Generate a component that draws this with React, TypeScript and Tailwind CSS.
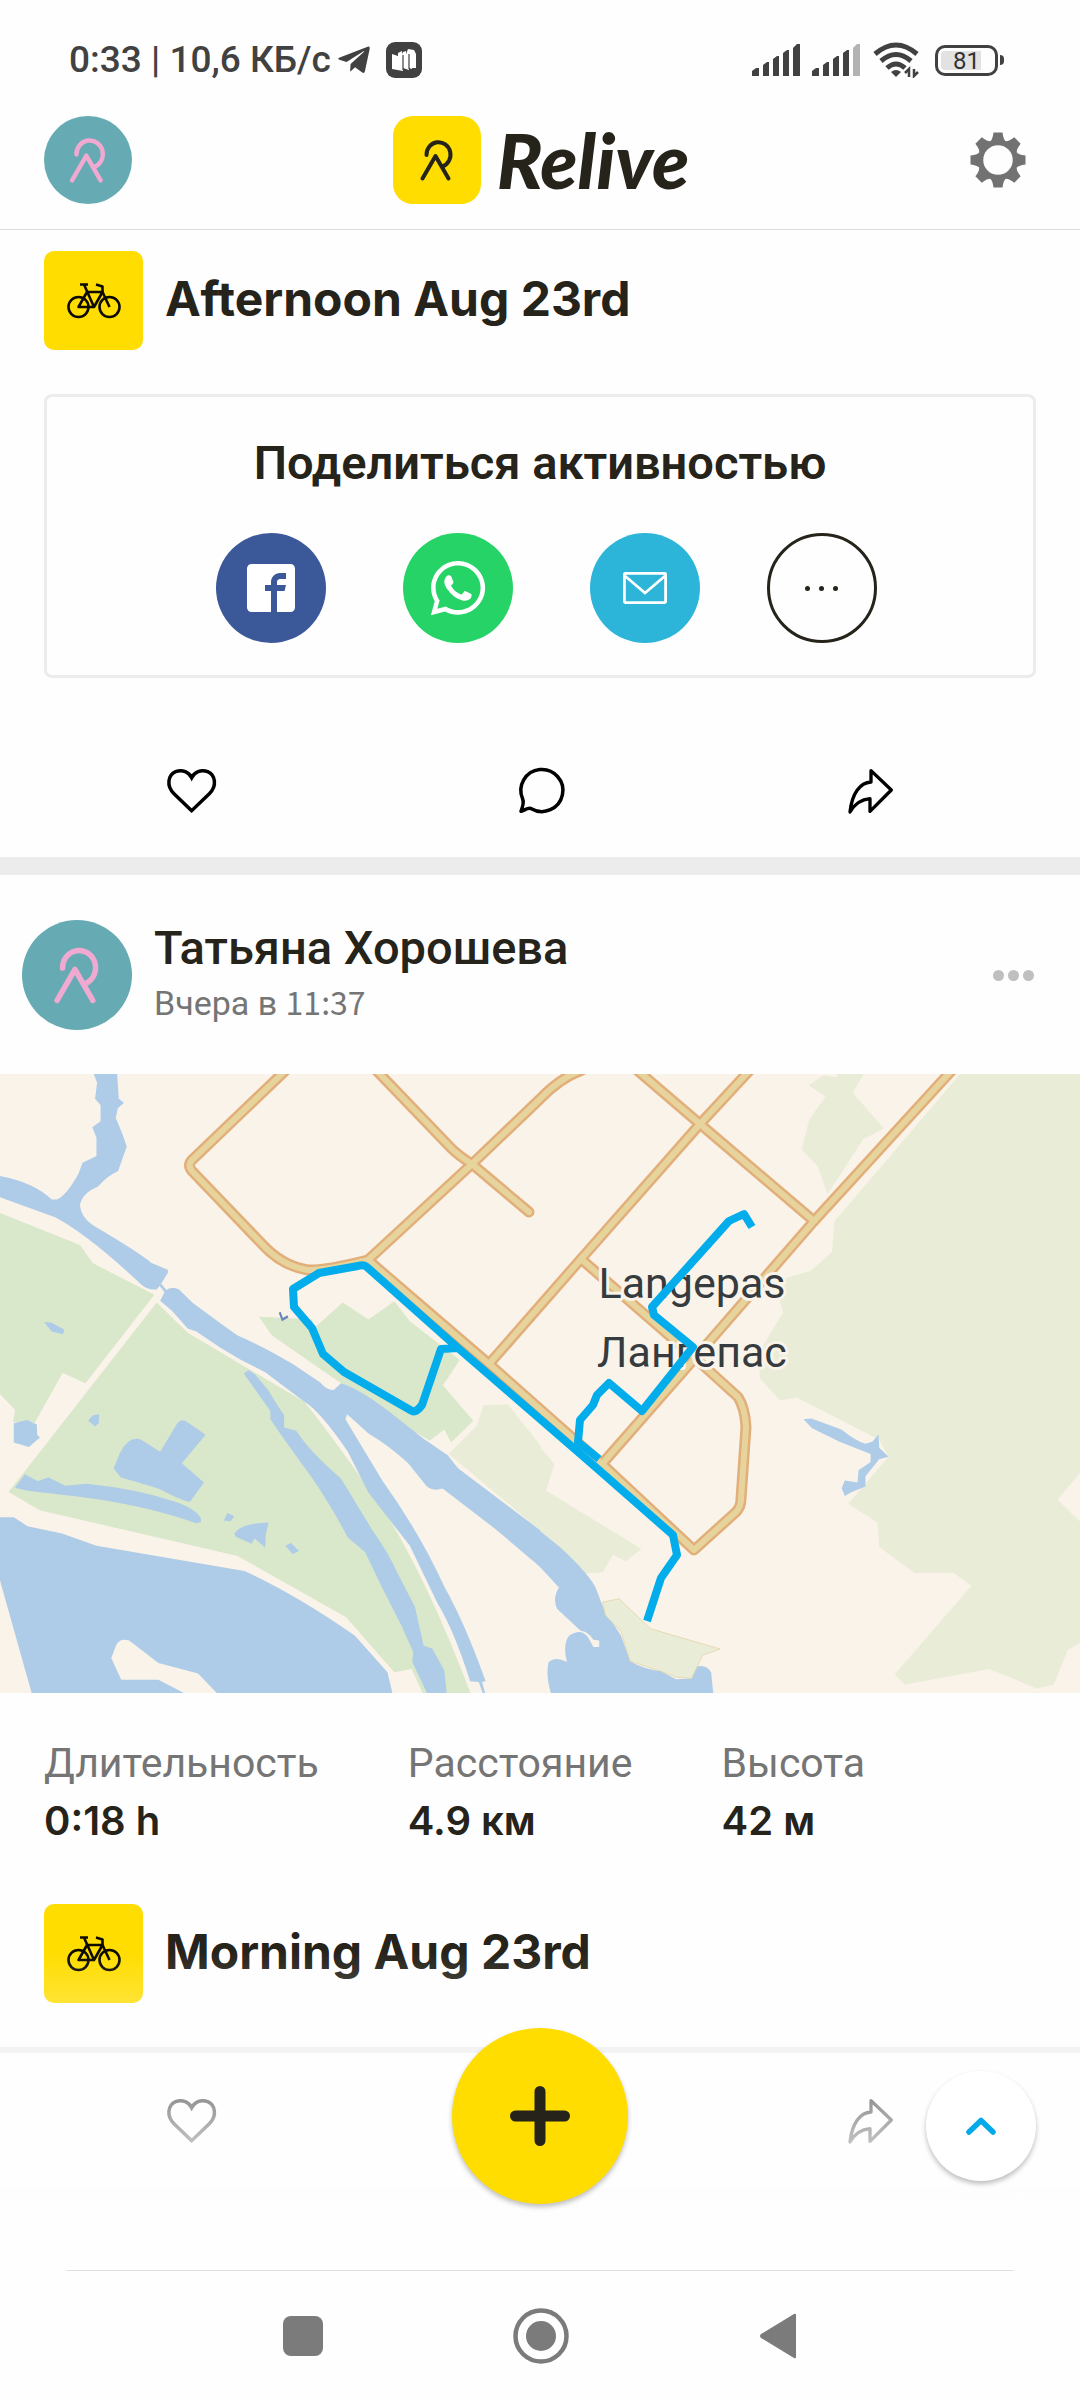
import { FaTelegramPlane, FaWhatsapp } from "react-icons/fa";
import { ImFacebook2 } from "react-icons/im";

const ROADS = [
  "M286 -4L192 86Q187 91 192 97L262 170Q282 192 308 196Q324 197 368 186L472 90L540 25Q560 4 582 -4",
  "M376 -4L451 74Q459 82 472 90L529 138",
  "M368 186L489 290L602 390L694 476L736 438Q741 433 741 425L746 353Q745 334 738 323L695 284L581 185",
  "M489 290L581 185L700 50L750 -4",
  "M637 -4L700 50L814 147",
  "M954 -6L814 147L695 284L602 390",
];

const ROUTE =
  "M752 153L744 140L729 147L652 233L654 241L693 273L642 337L609 309L597 321L593 331L580 346L578 368L599 385";
const ROUTE_MAIN =
  "M647 547L661 504L677 481L673 461L592 390L458 274L368 194Q364 190 358 192L319 199L293 215L294 233L312 254L323 280L344 298L412 337Q416 339 422 331L441 275L458 274";

const stats = [
  { label: "Длительность", value: "0:18 h" },
  { label: "Расстояние", value: "4.9 км" },
  { label: "Высота", value: "42 м" },
];

function Mark({ color, className }: { color: string; className: string }) {
  return (
    <svg viewBox="0 0 88 88" className={className} fill="none" stroke={color} strokeWidth="4" strokeLinecap="round" strokeLinejoin="round">
      <path d="M29.5 62.5L42.5 40L55.5 62.5" />
      <path d="M33.5 39A12 12.5 0 1 1 49.5 50.5" />
    </svg>
  );
}

function Avatar({ className }: { className: string }) {
  return (
    <span className={`block shrink-0 rounded-full bg-[#66abb4] ${className}`}>
      <Mark color="#f0a9d0" className="size-full scale-110" />
    </span>
  );
}

function Signal({ weak = false }: { weak?: boolean }) {
  return (
    <svg viewBox="0 0 48 32" className="h-8 w-12" fill="#414141">
      <path d="M0 32V27L4 24H7V32Z" />
      <path d="M11 32V21L15 18H17V32Z" />
      <path d="M21 32V15L25 12H27V32Z" />
      <path d="M31 32V9L35 6H37V32Z" />
      <path d="M41 32V4L45 0H48V32Z" fill={weak ? "#b3b3b3" : "#414141"} />
    </svg>
  );
}

function StatusBar() {
  return (
    <div className="flex h-[116px] items-center justify-between pl-[69px] pr-[76px] pt-1 text-[#414141]">
      <div className="flex items-center">
        <span className="text-[37px] font-medium leading-10">0:33 | 10,6 КБ/с</span>
        <FaTelegramPlane className="ml-[5px] size-9" />
        <svg viewBox="0 0 36 36" className="ml-[14px] size-9">
          <rect width="36" height="36" rx="9" fill="#414141" />
          <path d="M6 12L12 14V11L16 9V12L17 10L20 9V12L22 7L28 8L30 12V26H26V27L23 26V28L17 26V29L6 27Z" fill="#fff" />
          <path d="M17 13V28M23 12V27" stroke="#414141" strokeWidth="1.2" />
        </svg>
      </div>
      <div className="flex items-center">
        <Signal />
        <span className="w-3" />
        <Signal weak />
        <svg viewBox="0 0 46 36" className="ml-[13px] h-9 w-[46px]" fill="none" stroke="#414141" strokeWidth="5">
          <path d="M2 12Q23 -6 44 12" />
          <path d="M8 19Q23 6 38 19" />
          <path d="M14 26Q23 18 32 26" />
          <path d="M18 30Q23 26 28 30L23 35Z" fill="#414141" stroke="none" />
          <path d="M36 35V27L32 31M41 27V34L45 30" strokeWidth="2.5" />
        </svg>
        <div className="ml-4 flex h-[31px] w-[63px] items-center rounded-[10px] border-[3px] border-[#414141] p-[3px]">
          <span className="h-full w-10 rounded-l bg-[#e2e2e2] pl-3 text-[24px] leading-5 text-[#333]">81</span>
        </div>
        <span className="ml-[2px] h-[10px] w-1 rounded-r bg-[#414141]" />
      </div>
    </div>
  );
}

function Gear() {
  const angles = [0, 45, 90, 135, 180, 225, 270, 315];
  return (
    <svg viewBox="-28 -28 56 56" className="size-14" fill="#727272">
      <circle r="17.5" fill="none" stroke="#727272" strokeWidth="5.5" />
      {angles.map((a) => (
        <path key={a} d="M-8 -18.5Q-5.500 -20 -4.500 -27.500H4.500Q5.500 -20 8 -18.5Z" transform={`rotate(${a})`} />
      ))}
    </svg>
  );
}

function BikeTile() {
  return (
    <span className="flex size-[99px] shrink-0 items-center justify-center rounded-[10px] bg-[#ffdd00]">
      <svg viewBox="0 0 56 36" className="h-9 w-14" fill="none" stroke="#0d0b00" strokeWidth="2.6" strokeLinejoin="round">
        <circle cx="12.500" cy="24" r="10" />
        <circle cx="43.500" cy="24" r="10" />
        <path d="M14 1.500H22M18 1.500L28 24M30 1.500L36.500 3.500V9L43.500 24" />
        <path d="M21 9L12.500 24H28L36.500 9Z" />
      </svg>
    </span>
  );
}

function ActivityTitle({ children }: { children: string }) {
  return (
    <div className="flex items-center gap-[22px] px-11">
      <BikeTile />
      <h2 className="pb-1 font-['Inter'] text-[48px] font-bold leading-[60px]">{children}</h2>
    </div>
  );
}

function Actions() {
  const icon = "size-20";
  return (
    <div className="flex justify-between pl-[150px] pr-[170px] text-black">
      <button type="button" aria-label="Нравится">
        <svg viewBox="0 0 240 240" className={icon} fill="none" stroke="currentColor" strokeWidth="10.5">
          <path d="M125 182L72 131C48 108 54 75 77 65C98 57 117 67 125 83C133 67 152 57 173 65C196 75 202 108 178 131Z" />
        </svg>
      </button>
      <button type="button" aria-label="Комментировать" className="ml-6">
        <svg viewBox="0 0 240 240" className={icon} fill="none" stroke="currentColor" strokeWidth="10.5" strokeLinejoin="round">
          <path d="M62 147A63 63 0 1 1 88 176C78 171 68 181 57 184C61 172 67 160 62 147Z" />
        </svg>
      </button>
      <button type="button" aria-label="Отправить">
        <svg viewBox="0 0 240 240" className={icon} fill="none" stroke="currentColor" strokeWidth="10" strokeLinejoin="round">
          <path d="M60 186C66 130 90 98 123 96V62L184 120L120 184V146C96 148 76 158 60 186Z" />
        </svg>
      </button>
    </div>
  );
}

function ShareCard() {
  return (
    <section className="mx-11 mt-11 flex h-[284px] flex-col items-center rounded-lg border-[3px] border-[#ececec]">
      <h3 className="mt-9 text-[47px] font-semibold leading-[60px]">Поделиться активностью</h3>
      <div className="mt-10 flex items-center gap-[77px] pl-3">
        <button type="button" aria-label="Facebook" className="flex size-[110px] items-center justify-center rounded-full bg-[#3b5899] text-white">
          <ImFacebook2 className="size-12" />
        </button>
        <button type="button" aria-label="WhatsApp" className="flex size-[110px] items-center justify-center rounded-full bg-[#26d367] text-white">
          <FaWhatsapp className="size-[62px]" />
        </button>
        <button type="button" aria-label="Email" className="flex size-[110px] items-center justify-center rounded-full bg-[#2cb5d8]">
          <svg viewBox="0 0 44 32" className="h-8 w-11" fill="none" stroke="#fff" strokeWidth="2.800">
            <rect x="1.400" y="1.400" width="41.200" height="29.200" rx="1" />
            <path d="M2 4L22 21L42 4" />
          </svg>
        </button>
        <button type="button" aria-label="Ещё" className="-ml-[10px] flex size-[110px] items-center justify-center gap-[9px] rounded-full border-[3px] border-[#25231a]">
          <span className="size-[5px] rounded-full bg-[#25231a]" />
          <span className="size-[5px] rounded-full bg-[#25231a]" />
          <span className="size-[5px] rounded-full bg-[#25231a]" />
        </button>
      </div>
    </section>
  );
}

function RouteMap() {
  return (
    <svg viewBox="0 0 1080 619" className="block h-auto w-full overflow-hidden bg-[#faf3e9]">
      {/* west side */}
      <g transform="translate(0 -14) scale(.3444 .4082)">
        <g fill="#d9e7ca">
          <path d="M0 375L232 453 270 498 448 575 248 792 182 766 100 890 38 887 44 857 0 818Z" />
          <path d="M455 594L545 668 885 838Q980 940 1120 1110Q1250 1290 1370 1560H1232L1195 1492 1145 1500 1005 1365 690 1215 115 1103 25 1058Z" />
          <path d="M752 629L905 635 915 655 995 594 1070 636 1145 591 1190 640 1335 735 1286 797 1374 884 1310 937 1290 905 1248 932 1120 870 990 792 790 675Z" />
        </g>
        <path d="M1303 965L1385 895 1404 845 1475 844 1570 945V1154Z" fill="#e9edd7" />
        <g fill="#aecce8">
          <path d="M272 34L282 55 276 95 292 110 292 150 268 165 280 190 280 235 240 252 228 278Q195 330 165 342L150 342Q100 300 0 284V336L160 385Q260 430 410 550Q430 565 455 562L468 548 488 520 487 514 440 497Q400 470 270 405Q235 385 232 355Q240 325 285 310Q310 285 343 272L368 212 355 180 336 142 342 118 360 105 345 95 340 34Z" />
          <path d="M462 552L482 574 488 568 468 548Z" />
          <path d="M465 590L480 565Q500 552 520 562L560 595 640 645 690 675Q760 700 850 745L930 790Q950 810 970 808L990 792Q1040 805 1120 855L1230 928 1300 968 1330 1000 1570 1153V1243L1440 1150 1285 1050Q1250 1060 1230 1035L1185 988Q1130 945 1070 915L1008 868 1003 880 1110 1030Q1220 1160 1290 1290Q1350 1380 1410 1522L1400 1524 1409 1552 1402 1552 1390 1524 1365 1522Q1320 1400 1270 1330L1190 1190 1070 1060 1010 960Q930 860 880 835L770 765 700 735 640 705 570 665 545 658 500 615Z" />
          <path d="M0 1120H40L80 1142 180 1160 280 1190 710 1252Q860 1310 1030 1410L1125 1500 1142 1560H640L575 1503 460 1477 375 1422Q350 1415 338 1432L323 1465 352 1518H460L555 1560H95L0 1275Z" />
          <path d="M708 768L722 760 740 770 778 808Q800 840 825 870L825 900 860 908Q900 960 990 1025L1080 1150Q1130 1210 1150 1250L1205 1340 1230 1435 1255 1442 1290 1495 1298 1560H1245L1197 1475 1200 1450 1165 1385 1105 1285 1060 1205 1010 1170Q960 1090 905 1022Q850 960 785 880L785 860Z" />
          <path d="M330 1000L350 960Q375 920 410 930L465 960 515 890Q525 878 540 885L597 918 528 988 592 1035 552 1082Q540 1085 460 1050L350 1022Z" />
          <path d="M43 1048L72 1015 110 1032 140 1022 190 1043 250 1038Q400 1050 520 1085Q590 1110 583 1132L570 1135Q420 1090 230 1070L80 1055Z" />
          <path d="M128 642L148 643 187 660 183 672 150 665Z" />
          <path d="M256 883L270 870 288 868 287 890 275 898Z" />
          <path d="M40 890L78 882 107 893 108 918 116 925 84 948 40 937Z" />
          <path d="M650 1128L660 1110 680 1118 670 1130Z" />
          <path d="M680 1160Q700 1135 780 1133L772 1160 770 1195 740 1172 730 1185 685 1168Z" />
          <path d="M828 1190L845 1183 868 1203 850 1210Z" />
        </g>
        <path d="M812 618L820 636 836 628" fill="none" stroke="#6b84bd" strokeWidth="6" />
      </g>

      {/* east side */}
      <g transform="translate(540 -14) scale(.3444 .4082)">
        <g fill="#e9edd7">
          <path d="M0 948L42 990 18 1055 295 1198 248 1228 212 1212 182 1255 130 1258 0 1160Z" />
          <path d="M1220 34H1570V1010L1503 1077 1570 1132V1427L1533 1445 1492 1530 1443 1540 1305 1492 1060 1530 1030 1505 1253 1288 1200 1256 1087 1257 985 1193 980 1133 895 1087 1012 972 985 930 745 827 697 834 637 778 640 710 706 618 695 590 710 535 785 517 848 470 855 395Z" />
          <path d="M780 62L822 38 860 42 865 34H940L908 80 998 168 938 195 835 328 806 260 760 220 782 145 829 90Z" />
        </g>
        <g fill="#aecce8">
          <path d="M0 1154L60 1195Q150 1265 165 1300L185 1345 235 1410 262 1473Q300 1492 350 1497L395 1517 440 1515 440 1490Q480 1475 497 1500L504 1560H35Q15 1510 25 1475Q45 1460 78 1475Q65 1430 85 1410Q120 1390 140 1415L155 1438 172 1438 172 1422 155 1420Q140 1400 118 1398L50 1345Q35 1320 55 1292L0 1242Z" />
          <path d="M765 880L788 878 875 905Q920 935 945 940L965 935 983 917 985 950 1012 972 985 978 945 1020 945 1045 905 1058 885 1068 876 1050 885 1030 922 1035 925 1005 960 985 960 965Q900 945 870 935L790 902Z" />
        </g>
        <path d="M182 1328L230 1320 320 1393 523 1443 472 1458 457 1485 440 1515 395 1512 350 1497 262 1473 235 1400 190 1360Z" fill="#e9edd7" stroke="#e2d3a4" strokeWidth="2" />
      </g>

      <g fill="none" strokeLinecap="round" strokeLinejoin="round">
        <g stroke="#e2ae7a" strokeWidth="11">
          {ROADS.map((d) => <path key={d} d={d} />)}
        </g>
        <g stroke="#e7d49d" strokeWidth="6">
          {ROADS.map((d) => <path key={d} d={d} />)}
        </g>
      </g>

      <g className="font-['Roboto'] text-[43px]" fill="#353b3f" stroke="#faf3e9" strokeWidth="6" strokeLinejoin="round" paintOrder="stroke" textAnchor="middle">
        <text x="692" y="224">Langepas</text>
        <text x="692" y="293">Лангепас</text>
      </g>

      <g fill="none" stroke="#03adec" strokeWidth="8" strokeLinejoin="round">
        <path d={ROUTE} />
        <path d={ROUTE_MAIN} />
      </g>
    </svg>
  );
}

export default function App() {
  return (
    <div className="flex min-h-screen flex-col bg-[#fefefe] font-['Roboto',sans-serif] text-[#25231a]">
      <StatusBar />

      <header className="flex h-[114px] items-start justify-between border-b border-[#dcdcdc] pl-11 pr-[54px]">
        <a href="#profile" aria-label="Профиль"><Avatar className="size-[88px]" /></a>
        <a href="#home" className="mr-5 flex items-center gap-4">
          <span className="block size-[88px] rounded-[20px] bg-[#ffdd00]">
            <Mark color="#25231a" className="size-full" />
          </span>
          <span className="font-['Lato'] text-[76px] font-black italic leading-[84px]">Relive</span>
        </a>
        <button type="button" aria-label="Настройки" className="mt-4"><Gear /></button>
      </header>

      <article className="pt-[21px]">
        <ActivityTitle>Afternoon Aug 23rd</ActivityTitle>
        <ShareCard />
        <div className="mb-[27px] mt-[72px]"><Actions /></div>
      </article>

      <article className="border-t-[18px] border-[#ececec]">
        <div className="flex items-center px-[22px] pb-[43px] pt-11">
          <Avatar className="size-[110px]" />
          <div className="ml-[22px] grow pb-1">
            <h3 className="text-[47px] font-medium leading-[58px]">Татьяна Хорошева</h3>
            <p className="text-[34px] leading-[48px] text-[#757575]">
              Вчера в <span className="font-['Noto_Sans_CJK_SC'] text-[32px]">11:37</span>
            </p>
          </div>
          <button type="button" aria-label="Меню" className="mr-6 flex gap-1">
            <span className="size-[11px] rounded-full bg-[#bfbfbf]" />
            <span className="size-[11px] rounded-full bg-[#bfbfbf]" />
            <span className="size-[11px] rounded-full bg-[#bfbfbf]" />
          </button>
        </div>

        <RouteMap />

        <dl className="flex gap-[89px] px-11 pb-[52px] pt-11">
          {stats.map((s) => (
            <div key={s.label}>
              <dt className="text-[41px] leading-[52px] text-[#757575]">{s.label}</dt>
              <dd className="font-['Inter'] text-[40px] font-semibold leading-[63px]">{s.value}</dd>
            </div>
          ))}
        </dl>

        <div className="relative">
          <ActivityTitle>Morning Aug 23rd</ActivityTitle>
          <div className="mb-[27px] mt-11 h-[6px] bg-[#ececec]" />
          <Actions />
          <div className="mb-[67px] mt-7 h-[15px] bg-[#ececec]" />

          <div className="absolute inset-x-0 bottom-0 top-12 bg-linear-to-b from-[#fefefe]/0 to-[#fefefe]" />
          <button type="button" aria-label="Добавить" className="absolute left-1/2 top-[124px] flex size-44 -translate-x-1/2 items-center justify-center rounded-full bg-[#ffdd00] shadow-[0_3px_5px_rgba(0,0,0,0.25)]">
            <svg viewBox="0 0 60 60" className="size-[60px]" stroke="#25231a" strokeWidth="11" strokeLinecap="round">
              <path d="M30 5.500V54.500M5.500 30H54.500" />
            </svg>
          </button>
          <button type="button" aria-label="Наверх" className="absolute right-11 top-[167px] flex size-[110px] items-center justify-center rounded-full bg-white shadow-[0_3px_5px_rgba(0,0,0,0.25)]">
            <svg viewBox="0 0 30 18" className="h-[18px] w-[30px]" fill="none" stroke="#03a9e8" strokeWidth="5.500" strokeLinecap="round" strokeLinejoin="round">
              <path d="M3 15L15 3.500L27 15" />
            </svg>
          </button>
        </div>
      </article>

      <nav className="mx-[66px] flex h-[130px] items-center justify-center gap-[190px] border-t border-[#e0e0e0]">
        <button type="button" aria-label="Недавние" className="size-10 rounded-lg bg-[#7b7b7b]" />
        <button type="button" aria-label="Домой">
          <svg viewBox="0 0 56 56" className="size-14" fill="#7b7b7b">
            <circle cx="28" cy="28" r="25.500" fill="none" stroke="#7b7b7b" strokeWidth="4.500" />
            <circle cx="28" cy="28" r="15" />
          </svg>
        </button>
        <button type="button" aria-label="Назад">
          <svg viewBox="0 0 38 46" className="h-[46px] w-[38px]" fill="#7b7b7b">
            <path d="M35 1Q37 0 37 2V44Q37 46 35 45L2 25Q0 23 2 21Z" />
          </svg>
        </button>
      </nav>
    </div>
  );
}
